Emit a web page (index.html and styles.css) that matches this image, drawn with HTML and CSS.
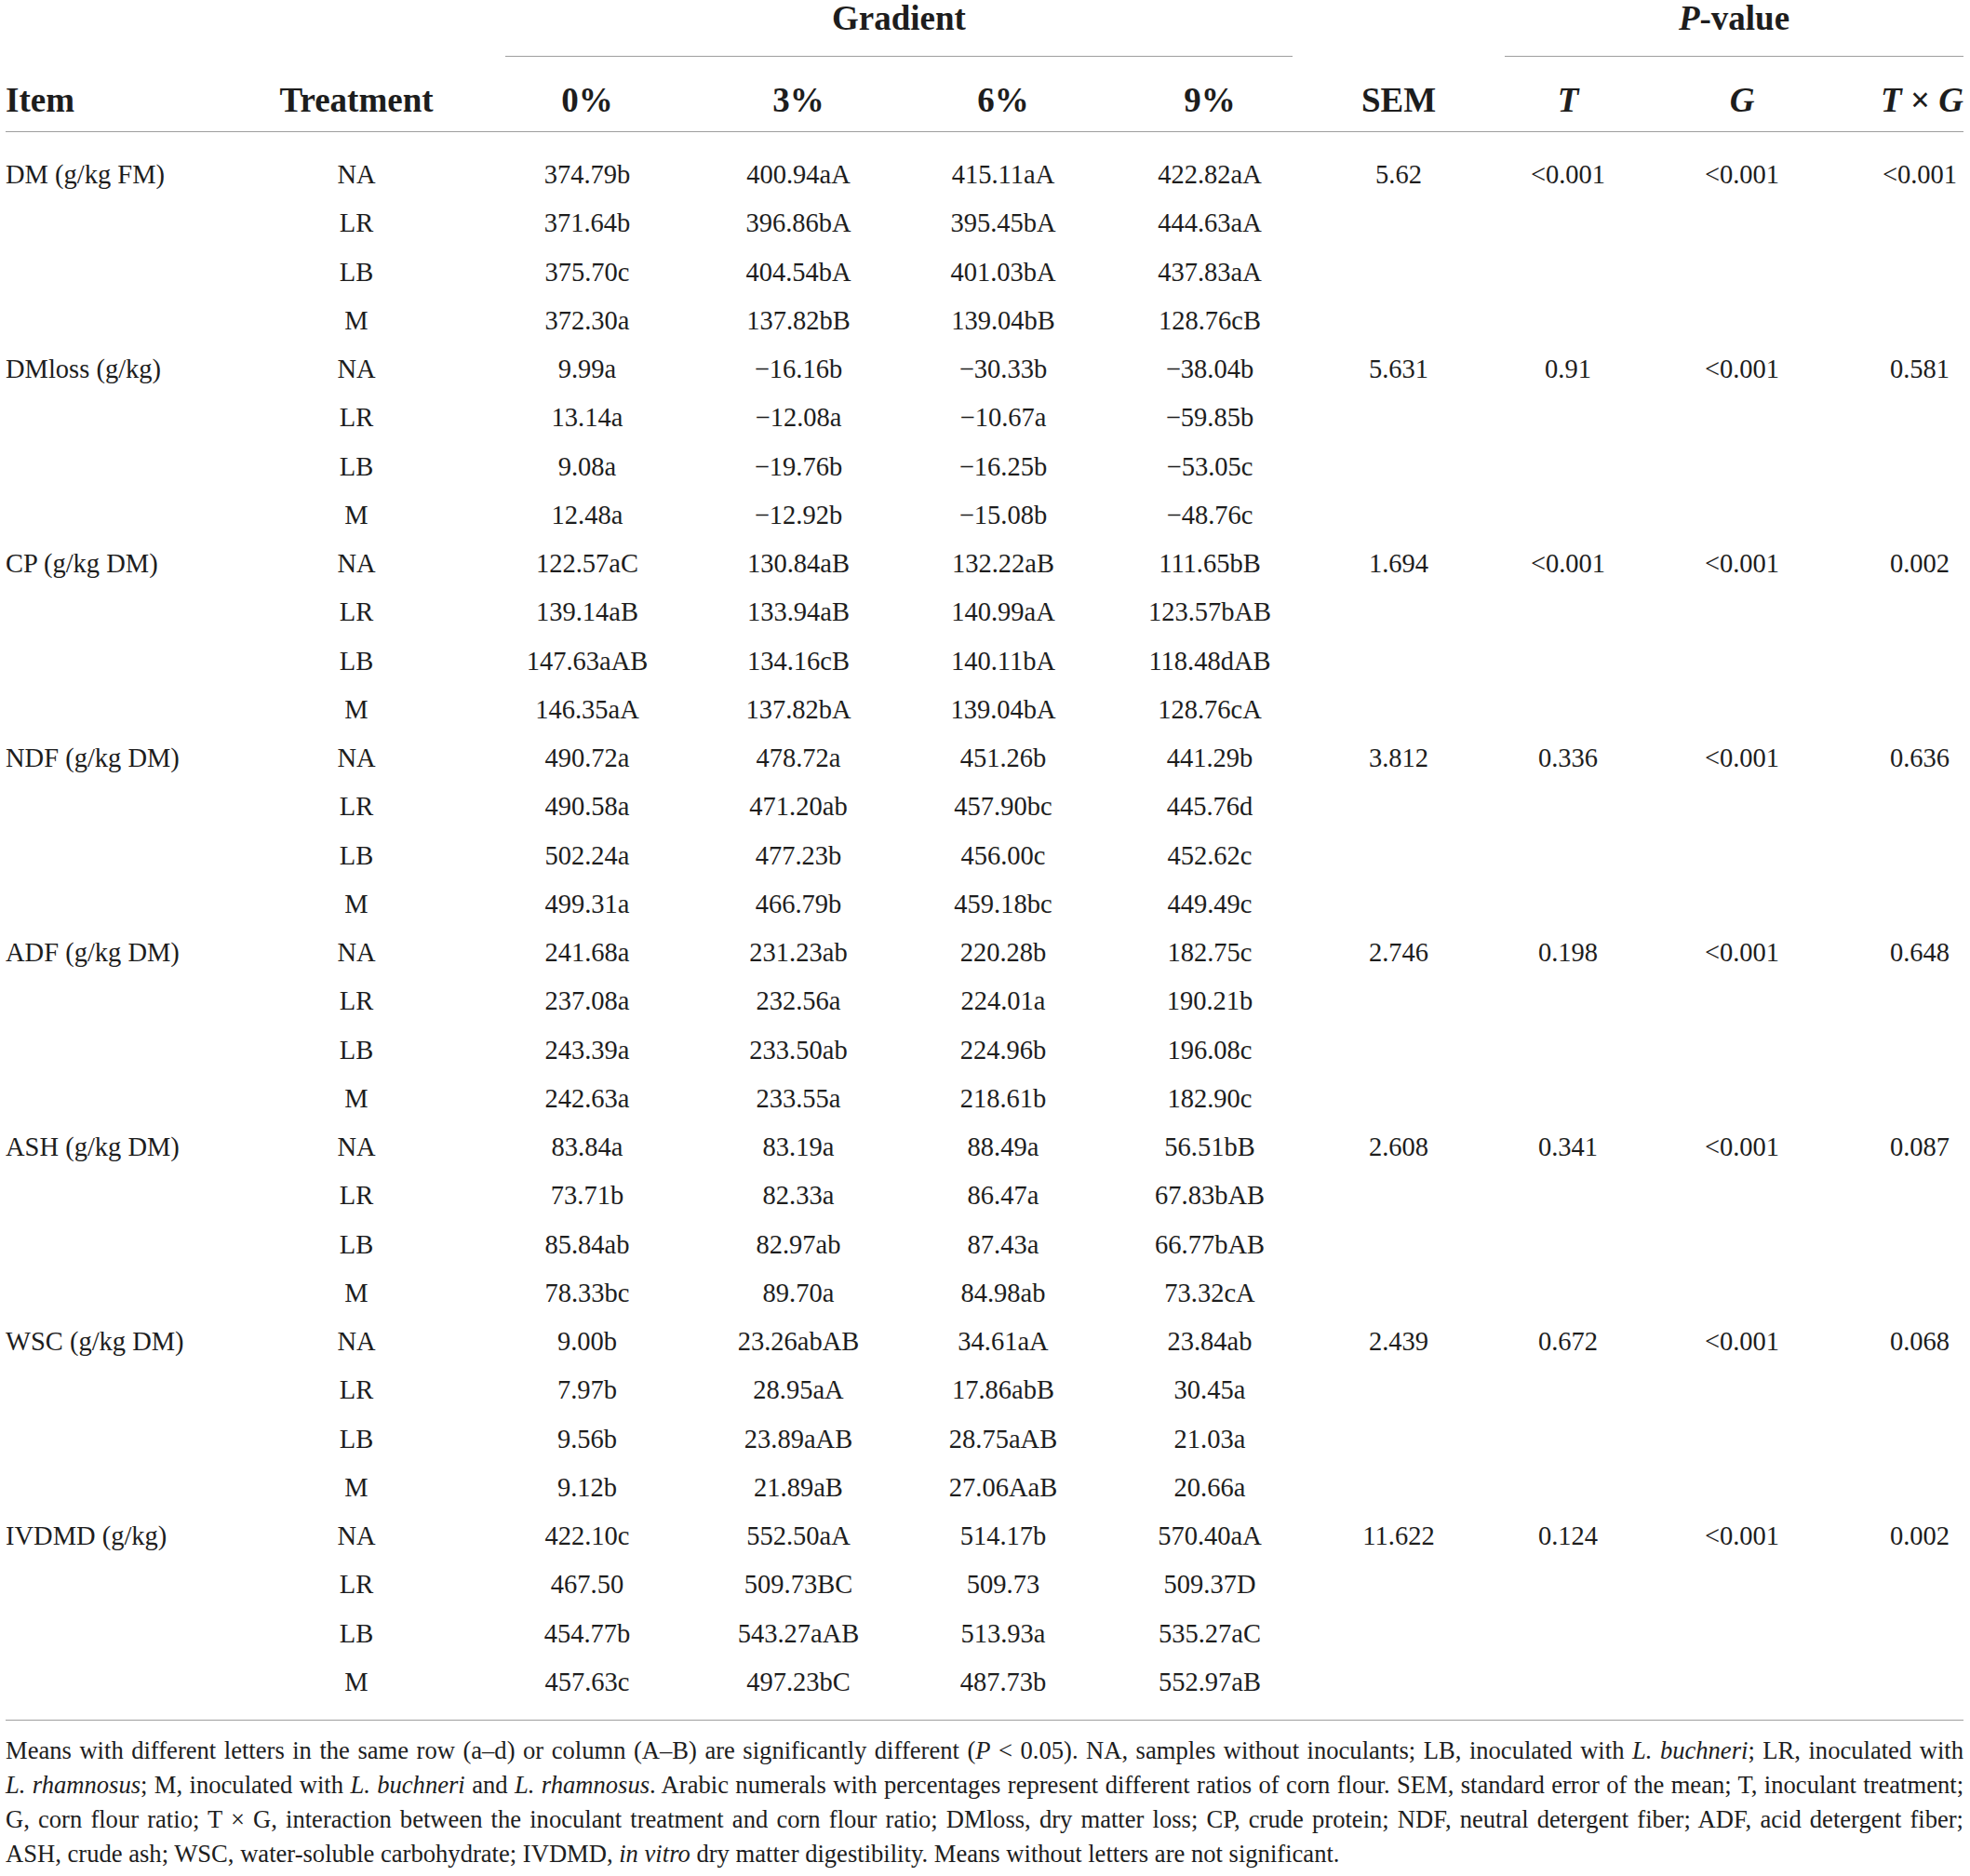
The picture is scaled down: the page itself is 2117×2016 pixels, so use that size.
FILE: index.html
```html
<!DOCTYPE html>
<html lang="en">
<head>
<meta charset="utf-8">
<title>Table</title>
<link rel="stylesheet" href="styles.css">
</head>
<body>
<div class="page">
  <div class="tbl">
    <div class="row top">
      <div class="c"></div><div class="c"></div>
      <div class="c span4"><div class="grp grad">Gradient</div></div>
      <div class="c"></div>
      <div class="c span3"><div class="grp pval"><i>P</i>-value</div></div>
    </div>
    <div class="row head">
      <div class="c l">Item</div>
      <div class="c">Treatment</div>
      <div class="c">0%</div>
      <div class="c">3%</div>
      <div class="c">6%</div>
      <div class="c">9%</div>
      <div class="c">SEM</div>
      <div class="c"><i>T</i></div>
      <div class="c"><i>G</i></div>
      <div class="c r"><span><i>T</i> × <i>G</i></span></div>
    </div>
    <div class="body">
      <div class="row"><div class="c l">DM (g/kg FM)</div><div class="c">NA</div><div class="c">374.79b</div><div class="c">400.94aA</div><div class="c">415.11aA</div><div class="c">422.82aA</div><div class="c">5.62</div><div class="c">&lt;0.001</div><div class="c">&lt;0.001</div><div class="c">&lt;0.001</div></div>
      <div class="row"><div class="c l"></div><div class="c">LR</div><div class="c">371.64b</div><div class="c">396.86bA</div><div class="c">395.45bA</div><div class="c">444.63aA</div><div class="c"></div><div class="c"></div><div class="c"></div><div class="c"></div></div>
      <div class="row"><div class="c l"></div><div class="c">LB</div><div class="c">375.70c</div><div class="c">404.54bA</div><div class="c">401.03bA</div><div class="c">437.83aA</div><div class="c"></div><div class="c"></div><div class="c"></div><div class="c"></div></div>
      <div class="row"><div class="c l"></div><div class="c">M</div><div class="c">372.30a</div><div class="c">137.82bB</div><div class="c">139.04bB</div><div class="c">128.76cB</div><div class="c"></div><div class="c"></div><div class="c"></div><div class="c"></div></div>

      <div class="row"><div class="c l">DMloss (g/kg)</div><div class="c">NA</div><div class="c">9.99a</div><div class="c">−16.16b</div><div class="c">−30.33b</div><div class="c">−38.04b</div><div class="c">5.631</div><div class="c">0.91</div><div class="c">&lt;0.001</div><div class="c">0.581</div></div>
      <div class="row"><div class="c l"></div><div class="c">LR</div><div class="c">13.14a</div><div class="c">−12.08a</div><div class="c">−10.67a</div><div class="c">−59.85b</div><div class="c"></div><div class="c"></div><div class="c"></div><div class="c"></div></div>
      <div class="row"><div class="c l"></div><div class="c">LB</div><div class="c">9.08a</div><div class="c">−19.76b</div><div class="c">−16.25b</div><div class="c">−53.05c</div><div class="c"></div><div class="c"></div><div class="c"></div><div class="c"></div></div>
      <div class="row"><div class="c l"></div><div class="c">M</div><div class="c">12.48a</div><div class="c">−12.92b</div><div class="c">−15.08b</div><div class="c">−48.76c</div><div class="c"></div><div class="c"></div><div class="c"></div><div class="c"></div></div>

      <div class="row"><div class="c l">CP (g/kg DM)</div><div class="c">NA</div><div class="c">122.57aC</div><div class="c">130.84aB</div><div class="c">132.22aB</div><div class="c">111.65bB</div><div class="c">1.694</div><div class="c">&lt;0.001</div><div class="c">&lt;0.001</div><div class="c">0.002</div></div>
      <div class="row"><div class="c l"></div><div class="c">LR</div><div class="c">139.14aB</div><div class="c">133.94aB</div><div class="c">140.99aA</div><div class="c">123.57bAB</div><div class="c"></div><div class="c"></div><div class="c"></div><div class="c"></div></div>
      <div class="row"><div class="c l"></div><div class="c">LB</div><div class="c">147.63aAB</div><div class="c">134.16cB</div><div class="c">140.11bA</div><div class="c">118.48dAB</div><div class="c"></div><div class="c"></div><div class="c"></div><div class="c"></div></div>
      <div class="row"><div class="c l"></div><div class="c">M</div><div class="c">146.35aA</div><div class="c">137.82bA</div><div class="c">139.04bA</div><div class="c">128.76cA</div><div class="c"></div><div class="c"></div><div class="c"></div><div class="c"></div></div>

      <div class="row"><div class="c l">NDF (g/kg DM)</div><div class="c">NA</div><div class="c">490.72a</div><div class="c">478.72a</div><div class="c">451.26b</div><div class="c">441.29b</div><div class="c">3.812</div><div class="c">0.336</div><div class="c">&lt;0.001</div><div class="c">0.636</div></div>
      <div class="row"><div class="c l"></div><div class="c">LR</div><div class="c">490.58a</div><div class="c">471.20ab</div><div class="c">457.90bc</div><div class="c">445.76d</div><div class="c"></div><div class="c"></div><div class="c"></div><div class="c"></div></div>
      <div class="row"><div class="c l"></div><div class="c">LB</div><div class="c">502.24a</div><div class="c">477.23b</div><div class="c">456.00c</div><div class="c">452.62c</div><div class="c"></div><div class="c"></div><div class="c"></div><div class="c"></div></div>
      <div class="row"><div class="c l"></div><div class="c">M</div><div class="c">499.31a</div><div class="c">466.79b</div><div class="c">459.18bc</div><div class="c">449.49c</div><div class="c"></div><div class="c"></div><div class="c"></div><div class="c"></div></div>

      <div class="row"><div class="c l">ADF (g/kg DM)</div><div class="c">NA</div><div class="c">241.68a</div><div class="c">231.23ab</div><div class="c">220.28b</div><div class="c">182.75c</div><div class="c">2.746</div><div class="c">0.198</div><div class="c">&lt;0.001</div><div class="c">0.648</div></div>
      <div class="row"><div class="c l"></div><div class="c">LR</div><div class="c">237.08a</div><div class="c">232.56a</div><div class="c">224.01a</div><div class="c">190.21b</div><div class="c"></div><div class="c"></div><div class="c"></div><div class="c"></div></div>
      <div class="row"><div class="c l"></div><div class="c">LB</div><div class="c">243.39a</div><div class="c">233.50ab</div><div class="c">224.96b</div><div class="c">196.08c</div><div class="c"></div><div class="c"></div><div class="c"></div><div class="c"></div></div>
      <div class="row"><div class="c l"></div><div class="c">M</div><div class="c">242.63a</div><div class="c">233.55a</div><div class="c">218.61b</div><div class="c">182.90c</div><div class="c"></div><div class="c"></div><div class="c"></div><div class="c"></div></div>

      <div class="row"><div class="c l">ASH (g/kg DM)</div><div class="c">NA</div><div class="c">83.84a</div><div class="c">83.19a</div><div class="c">88.49a</div><div class="c">56.51bB</div><div class="c">2.608</div><div class="c">0.341</div><div class="c">&lt;0.001</div><div class="c">0.087</div></div>
      <div class="row"><div class="c l"></div><div class="c">LR</div><div class="c">73.71b</div><div class="c">82.33a</div><div class="c">86.47a</div><div class="c">67.83bAB</div><div class="c"></div><div class="c"></div><div class="c"></div><div class="c"></div></div>
      <div class="row"><div class="c l"></div><div class="c">LB</div><div class="c">85.84ab</div><div class="c">82.97ab</div><div class="c">87.43a</div><div class="c">66.77bAB</div><div class="c"></div><div class="c"></div><div class="c"></div><div class="c"></div></div>
      <div class="row"><div class="c l"></div><div class="c">M</div><div class="c">78.33bc</div><div class="c">89.70a</div><div class="c">84.98ab</div><div class="c">73.32cA</div><div class="c"></div><div class="c"></div><div class="c"></div><div class="c"></div></div>

      <div class="row"><div class="c l">WSC (g/kg DM)</div><div class="c">NA</div><div class="c">9.00b</div><div class="c">23.26abAB</div><div class="c">34.61aA</div><div class="c">23.84ab</div><div class="c">2.439</div><div class="c">0.672</div><div class="c">&lt;0.001</div><div class="c">0.068</div></div>
      <div class="row"><div class="c l"></div><div class="c">LR</div><div class="c">7.97b</div><div class="c">28.95aA</div><div class="c">17.86abB</div><div class="c">30.45a</div><div class="c"></div><div class="c"></div><div class="c"></div><div class="c"></div></div>
      <div class="row"><div class="c l"></div><div class="c">LB</div><div class="c">9.56b</div><div class="c">23.89aAB</div><div class="c">28.75aAB</div><div class="c">21.03a</div><div class="c"></div><div class="c"></div><div class="c"></div><div class="c"></div></div>
      <div class="row"><div class="c l"></div><div class="c">M</div><div class="c">9.12b</div><div class="c">21.89aB</div><div class="c">27.06AaB</div><div class="c">20.66a</div><div class="c"></div><div class="c"></div><div class="c"></div><div class="c"></div></div>

      <div class="row"><div class="c l">IVDMD (g/kg)</div><div class="c">NA</div><div class="c">422.10c</div><div class="c">552.50aA</div><div class="c">514.17b</div><div class="c">570.40aA</div><div class="c">11.622</div><div class="c">0.124</div><div class="c">&lt;0.001</div><div class="c">0.002</div></div>
      <div class="row"><div class="c l"></div><div class="c">LR</div><div class="c">467.50</div><div class="c">509.73BC</div><div class="c">509.73</div><div class="c">509.37D</div><div class="c"></div><div class="c"></div><div class="c"></div><div class="c"></div></div>
      <div class="row"><div class="c l"></div><div class="c">LB</div><div class="c">454.77b</div><div class="c">543.27aAB</div><div class="c">513.93a</div><div class="c">535.27aC</div><div class="c"></div><div class="c"></div><div class="c"></div><div class="c"></div></div>
      <div class="row"><div class="c l"></div><div class="c">M</div><div class="c">457.63c</div><div class="c">497.23bC</div><div class="c">487.73b</div><div class="c">552.97aB</div><div class="c"></div><div class="c"></div><div class="c"></div><div class="c"></div></div>
    </div>
  </div>
  <div class="notes">
    <div class="nl j">Means with different letters in the same row (a–d) or column (A–B) are significantly different (<i>P</i> &lt; 0.05). NA, samples without inoculants; LB, inoculated with <i>L. buchneri</i>; LR, inoculated with</div>
    <div class="nl j"><i>L. rhamnosus</i>; M, inoculated with <i>L. buchneri</i> and <i>L. rhamnosus</i>. Arabic numerals with percentages represent different ratios of corn flour. SEM, standard error of the mean; T, inoculant treatment;</div>
    <div class="nl j">G, corn flour ratio; T × G, interaction between the inoculant treatment and corn flour ratio; DMloss, dry matter loss; CP, crude protein; NDF, neutral detergent fiber; ADF, acid detergent fiber;</div>
    <div class="nl">ASH, crude ash; WSC, water-soluble carbohydrate; IVDMD, <i>in vitro</i> dry matter digestibility. Means without letters are not significant.</div>
  </div>
</div>
</body>
</html>
```

FILE: styles.css
```css
html, body {
  margin: 0;
  padding: 0;
  background: #ffffff;
}

body {
  font-family: "Liberation Serif", "Times New Roman", serif;
  color: #1d1d1d;
}

.page {
  padding-left: 6px;
  width: 2104px;
}

.tbl {
  width: 2104px;
}

.row {
  display: grid;
  grid-template-columns: 294px 166px 330px 124px 316px 128px 278px 86px 288px 94px;
}

.c {
  display: flex;
  justify-content: center;
  white-space: nowrap;
  min-width: 0;
}

.c.l {
  justify-content: flex-start;
}

.c.r {
  justify-content: flex-end;
}

.span4 {
  grid-column: span 4;
}

.span3 {
  grid-column: span 3;
}

.top .c,
.head .c {
  font-weight: bold;
  font-size: 37px;
}

.top .c {
  display: block;
}

.grp {
  text-align: center;
  line-height: 40px;
  height: 40px;
  padding-bottom: 20px;
  border-bottom: 1.5px solid #9e9e9e;
}

.grad {
  margin-left: 77px;
  margin-right: -25px;
}

.pval {
  margin-left: -25px;
}

.head {
  padding-top: 14px;
  height: 66px;
  line-height: 66px;
  border-bottom: 1.5px solid #9e9e9e;
}

.body {
  padding-top: 20px;
  padding-bottom: 14px;
  border-bottom: 1.5px solid #9e9e9e;
}

.body .row {
  font-size: 28.5px;
  height: 52.25px;
  line-height: 52.25px;
}

.notes {
  margin-top: 14px;
  font-size: 26.6px;
  line-height: 36.9px;
  width: 2104px;
}

.nl {
  white-space: nowrap;
}

.nl.j {
  text-align: justify;
  text-align-last: justify;
}
```
